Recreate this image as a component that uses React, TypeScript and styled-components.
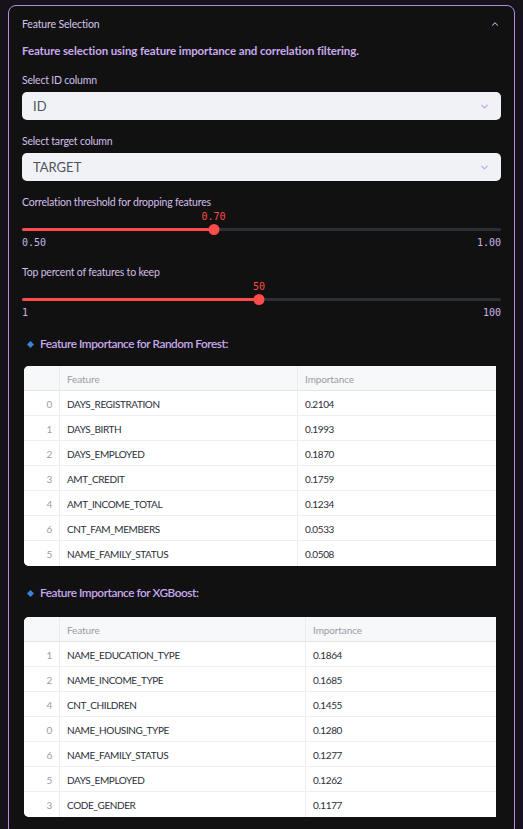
import React from "react";
import styled, { createGlobalStyle } from "styled-components";

const GlobalStyle = createGlobalStyle`
  html, body { margin: 0; padding: 0; background: #15121a; }
  body { font-family: "Lato", "Noto Sans", sans-serif; }
  * { box-sizing: border-box; }
`;

const Page = styled.div`
  padding: 5px 8px 0 8px;
`;

const Expander = styled.section`
  border: 1px solid #b88ce6;
  border-radius: 8px;
  background: #111111;
`;

const Header = styled.div`
  height: 36px;
  display: flex;
  align-items: center;
  justify-content: space-between;
  padding: 0 14px 0 13px;
  color: #d6c6ea;
  font-size: 10.5px;
  letter-spacing: -0.15px;
`;

const Body = styled.div`
  padding: 0 13px 18px 13px;
`;

const Description = styled.p`
  margin: 0;
  height: 18px;
  line-height: 18px;
  font-size: 11.5px;
  font-weight: 700;
  letter-spacing: -0.1px;
  color: #c9a9ee;
`;

const Label = styled.div<{ $mt: number }>`
  margin-top: ${(p) => p.$mt}px;
  height: 16px;
  line-height: 16px;
  font-size: 10.5px;
  letter-spacing: -0.2px;
  color: #d2bfe8;
`;

const SelectBox = styled.div`
  margin-top: 4px;
  height: 28px;
  border-radius: 5px;
  background: #f0f2f6;
  display: flex;
  align-items: center;
  justify-content: space-between;
  padding: 0 11px;
  font-size: 13px;
  color: #50535e;
`;

const SliderWrap = styled.div`
  display: flex;
  flex-direction: column;
`;

const ValueRow = styled.div`
  position: relative;
  height: 14px;
`;

const ValueText = styled.span`
  position: absolute;
  top: 1px;
  transform: translateX(-50%);
  font-family: "DejaVu Sans Mono", "Liberation Mono", monospace;
  font-size: 10px;
  line-height: 12px;
  color: #ff4b4b;
`;

const TrackArea = styled.div`
  position: relative;
  height: 11px;
  display: flex;
  align-items: center;
`;

const Track = styled.div`
  width: 100%;
  height: 3px;
  border-radius: 2px;
  background: #2d2f36;
  overflow: hidden;
`;

const Fill = styled.div`
  height: 100%;
  background: #ff4b4b;
`;

const Thumb = styled.div`
  position: absolute;
  top: 0;
  width: 11px;
  height: 11px;
  border-radius: 50%;
  background: #ff4b4b;
  transform: translateX(-50%);
`;

const MinMax = styled.div`
  margin-top: 2px;
  height: 12px;
  line-height: 12px;
  display: flex;
  justify-content: space-between;
  font-family: "DejaVu Sans Mono", "Liberation Mono", monospace;
  font-size: 10px;
  color: #c9b5e6;
`;

const Heading = styled.h3<{ $mt: number }>`
  margin: ${(p) => p.$mt}px 0 0 0;
  height: 16px;
  line-height: 16px;
  display: flex;
  align-items: center;
  gap: 7px;
  padding-left: 6px;
  font-size: 11.8px;
  font-weight: 600;
  letter-spacing: -0.45px;
  color: #c9a9ee;
`;

const Diamond = styled.span`
  width: 5px;
  height: 5px;
  background: #3b82e0;
  transform: rotate(45deg);
  flex: none;
`;

const TableWrap = styled.div<{ $mt: number }>`
  margin: ${(p) => p.$mt}px 0 0 2px;
  width: 472px;
  background: #ffffff;
  border-radius: 5px 0 0 5px;
  overflow: hidden;
`;

const Row = styled.div<{ $cols: string; $head?: boolean }>`
  display: grid;
  grid-template-columns: ${(p) => p.$cols};
  height: 25px;
  background: ${(p) => (p.$head ? "#f7f8fa" : "#ffffff")};
  border-bottom: 1px solid ${(p) => (p.$head ? "#e3e4e8" : "#efefef")};
  &:last-child { border-bottom: none; }
  font-size: 10px;
  letter-spacing: ${(p) => (p.$head ? "-0.1px" : "-0.4px")};
`;

const Cell = styled.div<{ $index?: boolean; $head?: boolean }>`
  display: flex;
  align-items: center;
  justify-content: ${(p) => (p.$index ? "flex-end" : "flex-start")};
  padding: 1px 7px 0 7px;
  border-right: 1px solid #ececec;
  color: ${(p) => (p.$head || p.$index ? "#9a9ca3" : "#2c2e38")};
  &:last-child { border-right: none; }
`;

function ChevronDown() {
  return (
    <svg width="11" height="11" viewBox="0 0 24 24" fill="none" stroke="#c4a2f2" strokeWidth="2.5" strokeLinecap="round" strokeLinejoin="round">
      <path d="M6 9l6 6 6-6" />
    </svg>
  );
}

function ChevronUp() {
  return (
    <svg width="10" height="10" viewBox="0 0 24 24" fill="none" stroke="#c9b0ee" strokeWidth="2.5" strokeLinecap="round" strokeLinejoin="round">
      <path d="M6 15l6-6 6 6" />
    </svg>
  );
}

function Slider({ value, min, max, display, minLabel, maxLabel }: { value: number; min: number; max: number; display: string; minLabel: string; maxLabel: string }) {
  const pct = ((value - min) / (max - min)) * 100;
  return (
    <SliderWrap>
      <ValueRow>
        <ValueText style={{ left: `${pct}%` }}>{display}</ValueText>
      </ValueRow>
      <TrackArea>
        <Track>
          <Fill style={{ width: `${pct}%` }} />
        </Track>
        <Thumb style={{ left: `${pct}%` }} />
      </TrackArea>
      <MinMax>
        <span>{minLabel}</span>
        <span>{maxLabel}</span>
      </MinMax>
    </SliderWrap>
  );
}

type Item = [number, string, string];

function DataTable({ rows, cols, mt }: { rows: Item[]; cols: string; mt: number }) {
  return (
    <TableWrap $mt={mt}>
      <Row $cols={cols} $head>
        <Cell $head />
        <Cell $head>Feature</Cell>
        <Cell $head>Importance</Cell>
      </Row>
      {rows.map(([i, f, v]) => (
        <Row key={f} $cols={cols}>
          <Cell $index>{i}</Cell>
          <Cell>{f}</Cell>
          <Cell>{v}</Cell>
        </Row>
      ))}
    </TableWrap>
  );
}

const rf: Item[] = [
  [0, "DAYS_REGISTRATION", "0.2104"],
  [1, "DAYS_BIRTH", "0.1993"],
  [2, "DAYS_EMPLOYED", "0.1870"],
  [3, "AMT_CREDIT", "0.1759"],
  [4, "AMT_INCOME_TOTAL", "0.1234"],
  [6, "CNT_FAM_MEMBERS", "0.0533"],
  [5, "NAME_FAMILY_STATUS", "0.0508"],
];

const xgb: Item[] = [
  [1, "NAME_EDUCATION_TYPE", "0.1864"],
  [2, "NAME_INCOME_TYPE", "0.1685"],
  [4, "CNT_CHILDREN", "0.1455"],
  [0, "NAME_HOUSING_TYPE", "0.1280"],
  [6, "NAME_FAMILY_STATUS", "0.1277"],
  [5, "DAYS_EMPLOYED", "0.1262"],
  [3, "CODE_GENDER", "0.1177"],
];

export default function App() {
  return (
    <>
      <GlobalStyle />
      <Page>
        <Expander>
          <Header>
            <span>Feature Selection</span>
            <ChevronUp />
          </Header>
          <Body>
            <Description>Feature selection using feature importance and correlation filtering.</Description>
            <Label $mt={12}>Select ID column</Label>
            <SelectBox>
              <span>ID</span>
              <ChevronDown />
            </SelectBox>
            <Label $mt={13}>Select target column</Label>
            <SelectBox>
              <span>TARGET</span>
              <ChevronDown />
            </SelectBox>
            <Label $mt={13}>Correlation threshold for dropping features</Label>
            <Slider value={0.7} min={0.5} max={1} display="0.70" minLabel="0.50" maxLabel="1.00" />
            <Label $mt={15}>Top percent of features to keep</Label>
            <Slider value={50} min={1} max={100} display="50" minLabel="1" maxLabel="100" />
            <Heading $mt={17}>
              <Diamond />
              Feature Importance for Random Forest:
            </Heading>
            <DataTable rows={rf} cols="36px 238px 1fr" mt={14} />
            <Heading $mt={19}>
              <Diamond />
              Feature Importance for XGBoost:
            </Heading>
            <DataTable rows={xgb} cols="36px 246px 1fr" mt={16} />
          </Body>
        </Expander>
      </Page>
    </>
  );
}
